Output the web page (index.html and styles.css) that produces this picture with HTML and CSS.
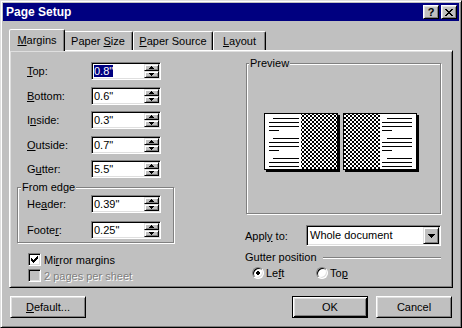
FILE: index.html
```html
<!DOCTYPE html>
<html lang="en">
<head>
    <meta charset="UTF-8">
    <title>Page Setup</title>
    <link rel="stylesheet" href="styles.css">
</head>
<body>
<div class="dialog">
    <div class="titlebar">
        <span class="title">Page Setup</span>
        <div class="title-buttons">
            <span class="tbtn">?</span>
            <span class="tbtn">
                <svg width="8" height="7" viewBox="0 0 8 7"><path d="M0 0h2v1H0zM6 0h2v1H6zM1 1h2v1H1zM5 1h2v1H5zM2 2h4v1H2zM3 3h2v1H3zM2 4h4v1H2zM1 5h2v1H1zM5 5h2v1H5zM0 6h2v1H0zM6 6h2v1H6z"/></svg>
            </span>
        </div>
    </div>

    <div class="sheet">
        <div class="tabs">
            <div class="tab active"><span><u>M</u>argins</span></div>
            <div class="tab tab-size"><span>Paper <u>S</u>ize</span></div>
            <div class="tab tab-source"><span><u>P</u>aper Source</span></div>
            <div class="tab tab-layout"><span><u>L</u>ayout</span></div>
        </div>

        <div class="panel">
            <div class="col-left">
                <div class="fields">
                    <div class="field">
                        <label><u>T</u>op:</label>
                        <div class="spin"><span class="value"><span class="sel">0.8"</span></span><span class="arrows"><span class="arr"><svg width="5" height="3"><path d="M2 0h1v1h1v1h1v1H0V2h1V1h1z"/></svg></span><span class="arr"><svg width="5" height="3"><path d="M0 0h5v1H4v1H3v1H2V2H1V1H0z"/></svg></span></span></div>
                    </div>
                    <div class="field">
                        <label><u>B</u>ottom:</label>
                        <div class="spin"><span class="value">0.6"</span><span class="arrows"><span class="arr"><svg width="5" height="3"><path d="M2 0h1v1h1v1h1v1H0V2h1V1h1z"/></svg></span><span class="arr"><svg width="5" height="3"><path d="M0 0h5v1H4v1H3v1H2V2H1V1H0z"/></svg></span></span></div>
                    </div>
                    <div class="field">
                        <label>I<u>n</u>side:</label>
                        <div class="spin"><span class="value">0.3"</span><span class="arrows"><span class="arr"><svg width="5" height="3"><path d="M2 0h1v1h1v1h1v1H0V2h1V1h1z"/></svg></span><span class="arr"><svg width="5" height="3"><path d="M0 0h5v1H4v1H3v1H2V2H1V1H0z"/></svg></span></span></div>
                    </div>
                    <div class="field">
                        <label><u>O</u>utside:</label>
                        <div class="spin"><span class="value">0.7"</span><span class="arrows"><span class="arr"><svg width="5" height="3"><path d="M2 0h1v1h1v1h1v1H0V2h1V1h1z"/></svg></span><span class="arr"><svg width="5" height="3"><path d="M0 0h5v1H4v1H3v1H2V2H1V1H0z"/></svg></span></span></div>
                    </div>
                    <div class="field">
                        <label>G<u>u</u>tter:</label>
                        <div class="spin"><span class="value">5.5"</span><span class="arrows"><span class="arr"><svg width="5" height="3"><path d="M2 0h1v1h1v1h1v1H0V2h1V1h1z"/></svg></span><span class="arr"><svg width="5" height="3"><path d="M0 0h5v1H4v1H3v1H2V2H1V1H0z"/></svg></span></span></div>
                    </div>
                </div>

                <div class="group edge">
                    <div class="group-title">From edge</div>
                    <div class="field">
                        <label>He<u>a</u>der:</label>
                        <div class="spin"><span class="value">0.39"</span><span class="arrows"><span class="arr"><svg width="5" height="3"><path d="M2 0h1v1h1v1h1v1H0V2h1V1h1z"/></svg></span><span class="arr"><svg width="5" height="3"><path d="M0 0h5v1H4v1H3v1H2V2H1V1H0z"/></svg></span></span></div>
                    </div>
                    <div class="field">
                        <label>Foote<u>r</u>:</label>
                        <div class="spin"><span class="value">0.25"</span><span class="arrows"><span class="arr"><svg width="5" height="3"><path d="M2 0h1v1h1v1h1v1H0V2h1V1h1z"/></svg></span><span class="arr"><svg width="5" height="3"><path d="M0 0h5v1H4v1H3v1H2V2H1V1H0z"/></svg></span></span></div>
                    </div>
                </div>

                <div class="checks">
                    <div class="check">
                        <span class="box"><svg width="7" height="7"><path d="M6 0h1v1H6zM5 1h2v1H5zM0 2h1v1H0zM4 2h3v1H4zM0 3h2v1H0zM3 3h3v1H3zM0 4h5v1H0zM1 5h3v1H1zM2 6h1v1H2z"/></svg></span>
                        <span>Mi<u>r</u>ror margins</span>
                    </div>
                    <div class="check disabled">
                        <span class="box"></span>
                        <span>2 pages per sheet</span>
                    </div>
                </div>
            </div>

            <div class="col-right">
                <div class="group preview">
                    <div class="group-title">Preview</div>
                    <div class="preview-body">
                        <svg width="155" height="59" viewBox="0 0 155 59">
                            <defs>
                                <pattern id="chk" width="4" height="4" patternUnits="userSpaceOnUse">
                                    <rect width="4" height="4" fill="#fff"/>
                                    <rect width="2" height="2" fill="#000"/>
                                    <rect x="2" y="2" width="2" height="2" fill="#000"/>
                                </pattern>
                            </defs>
                            <!-- left page -->
                            <rect x="2" y="2" width="74" height="57" fill="#000"/>
                            <rect x="0" y="0" width="74" height="57" fill="#000"/>
                            <rect x="1" y="1" width="72" height="55" fill="#fff"/>
                            <rect x="37" y="1" width="36" height="55" fill="url(#chk)"/>
                            <g fill="#000">
                                <rect x="9" y="5" width="26" height="1"/>
                                <rect x="5" y="9" width="30" height="1"/>
                                <rect x="5" y="13" width="30" height="1"/>
                                <rect x="5" y="17" width="10" height="1"/>
                                <rect x="9" y="25" width="26" height="1"/>
                                <rect x="5" y="29" width="30" height="1"/>
                                <rect x="5" y="33" width="30" height="1"/>
                                <rect x="5" y="37" width="10" height="1"/>
                                <rect x="9" y="45" width="26" height="1"/>
                                <rect x="5" y="49" width="30" height="1"/>
                                <rect x="5" y="53" width="30" height="1"/>
                            </g>
                            <!-- right page -->
                            <rect x="81" y="2" width="74" height="57" fill="#000"/>
                            <rect x="79" y="0" width="74" height="57" fill="#000"/>
                            <rect x="80" y="1" width="72" height="55" fill="#fff"/>
                            <rect x="80" y="1" width="36" height="55" fill="url(#chk)"/>
                            <g fill="#000">
                                <rect x="123" y="5" width="25" height="1"/>
                                <rect x="118" y="9" width="30" height="1"/>
                                <rect x="118" y="13" width="30" height="1"/>
                                <rect x="118" y="17" width="10" height="1"/>
                                <rect x="123" y="25" width="25" height="1"/>
                                <rect x="118" y="29" width="30" height="1"/>
                                <rect x="118" y="33" width="30" height="1"/>
                                <rect x="118" y="37" width="10" height="1"/>
                                <rect x="123" y="45" width="25" height="1"/>
                                <rect x="118" y="49" width="30" height="1"/>
                                <rect x="118" y="53" width="30" height="1"/>
                            </g>
                        </svg>
                    </div>
                </div>

                <div class="apply">
                    <label>Appl<u>y</u> to:</label>
                    <div class="combo">
                        <span class="value">Whole document</span>
                        <span class="drop"><svg width="7" height="4"><path d="M0 0h7v1H6v1H5v1H4v1H3V3H2V2H1V1H0z"/></svg></span>
                    </div>
                </div>

                <div class="gutter-head">
                    <span>Gutter position</span>
                    <span class="rule"></span>
                </div>

                <div class="radios">
                    <div class="radio radio-left">
                        <span class="circle"><svg width="4" height="4"><path d="M1 0h2v1h1v2H3v1H1V3H0V1h1z"/></svg></span>
                        <span>Le<u>f</u>t</span>
                    </div>
                    <div class="radio">
                        <span class="circle"></span>
                        <span>To<u>p</u></span>
                    </div>
                </div>
            </div>
        </div>

        <div class="buttons">
            <div class="btn"><span><u>D</u>efault...</span></div>
            <div class="btn default-btn push-right">OK</div>
            <div class="btn">Cancel</div>
        </div>
    </div>
</div>
</body>
</html>
```

FILE: styles.css
```css
body {
    margin: 0;
    font-family: "Liberation Sans", Arial, sans-serif;
    font-size: 11px;
    color: #000;
    background-color: #c0c0c0;
}

.dialog {
    width: 462px;
    height: 328px;
    box-sizing: border-box;
    padding: 2px;
    background-color: #c0c0c0;
    border: 1px solid;
    border-color: #dfdfdf #000 #000 #dfdfdf;
    box-shadow: inset 1px 1px #fff, inset -1px -1px #808080;
}

/* title bar */
.titlebar {
    height: 18px;
    display: flex;
    align-items: center;
    padding: 0 2px 0 3px;
    background-color: #000080;
    color: #fff;
}

.title {
    font-weight: bold;
    font-size: 12px;
}

.title-buttons {
    margin-left: auto;
    display: flex;
    gap: 2px;
}

.tbtn {
    width: 16px;
    height: 14px;
    box-sizing: border-box;
    display: flex;
    align-items: center;
    justify-content: center;
    background-color: #c0c0c0;
    color: #000;
    font-weight: bold;
    font-size: 11px;
    line-height: 1;
    border: 1px solid;
    border-color: #fff #000 #000 #fff;
    box-shadow: inset 1px 1px #dfdfdf, inset -1px -1px #808080;
}

/* tabs */
.sheet {
    margin: 8px 6px 0;
}

.tabs {
    height: 21px;
    display: flex;
    align-items: flex-end;
    padding-left: 2px;
}

.tab {
    height: 19px;
    box-sizing: border-box;
    display: flex;
    align-items: center;
    justify-content: center;
    border: 1px solid;
    border-bottom: none;
    border-color: #fff #000 transparent #fff;
    border-radius: 2px 2px 0 0;
    box-shadow: inset -1px 0 #808080;
}

.tab.active {
    position: relative;
    z-index: 1;
    width: 56px;
    height: 22px;
    margin: 0 -2px -1px -2px;
    padding-bottom: 2px;
    background-color: #c0c0c0;
}

.tab-size { width: 70px; }
.tab-source { width: 80px; }
.tab-layout { width: 53px; }

.panel {
    height: 238px;
    box-sizing: border-box;
    padding: 11px 11px 0 7px;
    display: grid;
    grid-template-columns: 158px 196px;
    justify-content: space-between;
    align-items: start;
    border: 1px solid;
    border-color: #fff #000 #000 #fff;
    box-shadow: inset 1px 1px #dfdfdf, inset -1px -1px #808080;
}

/* spin fields */
.fields {
    display: flex;
    flex-direction: column;
    gap: 6.5px;
}

.field {
    display: flex;
    align-items: center;
    padding-left: 10px;
}

.field label {
    width: 64px;
}

.spin {
    width: 70px;
    height: 18px;
    box-sizing: border-box;
    padding: 1px;
    display: flex;
    background-color: #fff;
    border: 1px solid;
    border-color: #808080 #fff #fff #808080;
    box-shadow: inset 1px 1px #000, inset -1px -1px #dfdfdf;
}

.spin .value {
    flex: 1;
    padding-left: 1px;
    line-height: 14px;
}

.sel {
    background-color: #000080;
    color: #fff;
}

.arrows {
    width: 15px;
    display: flex;
    flex-direction: column;
}

.arr {
    flex: 1;
    box-sizing: border-box;
    display: flex;
    align-items: center;
    justify-content: center;
    background-color: #c0c0c0;
    border: 1px solid;
    border-color: #dfdfdf #000 #000 #dfdfdf;
    box-shadow: inset 1px 1px #fff, inset -1px -1px #808080;
}

.arr svg,
.drop svg {
    display: block;
}

/* group boxes */
.group {
    box-sizing: border-box;
    border: 1px solid #808080;
    box-shadow: inset 1px 1px #fff, 1px 1px #fff;
}

.group-title {
    width: fit-content;
    margin: -7px 0 0 3px;
    padding: 0 1px;
    line-height: 13px;
    background-color: #c0c0c0;
}

.edge {
    width: 157px;
    height: 56px;
    margin-top: 9px;
}

.edge .field {
    padding-left: 9px;
    margin-top: 1px;
}

.edge .field + .field {
    margin-top: 8px;
}

/* checkboxes */
.checks {
    margin-top: 10px;
    padding-left: 11px;
    display: flex;
    flex-direction: column;
    gap: 3px;
}

.check {
    height: 13px;
    display: flex;
    align-items: center;
    gap: 3px;
}

.box {
    width: 13px;
    height: 13px;
    box-sizing: border-box;
    display: flex;
    align-items: center;
    justify-content: center;
    background-color: #fff;
    border: 1px solid;
    border-color: #808080 #fff #fff #808080;
    box-shadow: inset 1px 1px #000, inset -1px -1px #dfdfdf;
}

.check.disabled {
    color: #808080;
    text-shadow: 1px 1px #fff;
}

.check.disabled .box {
    background-color: #c0c0c0;
}

/* right column */
.preview {
    width: 195px;
    height: 151px;
    margin: 1px 0 0 1px;
    display: flex;
    flex-direction: column;
}

.preview .group-title {
    margin-left: 2px;
}

.preview-body {
    flex: 1;
    display: flex;
    align-items: center;
    justify-content: center;
}

.preview-body svg {
    margin-right: 4px;
    margin-top: 1px;
}

.apply {
    margin-top: 11px;
    display: flex;
    align-items: center;
}

.apply label {
    width: 61px;
}

.combo {
    width: 135px;
    height: 21px;
    box-sizing: border-box;
    padding: 1px;
    display: flex;
    background-color: #fff;
    border: 1px solid;
    border-color: #808080 #fff #fff #808080;
    box-shadow: inset 1px 1px #000, inset -1px -1px #dfdfdf;
}

.combo .value {
    flex: 1;
    padding-left: 2px;
    line-height: 17px;
}

.drop {
    width: 16px;
    box-sizing: border-box;
    display: flex;
    align-items: center;
    justify-content: center;
    background-color: #c0c0c0;
    border: 1px solid;
    border-color: #dfdfdf #000 #000 #dfdfdf;
    box-shadow: inset 1px 1px #fff, inset -1px -1px #808080;
}

.gutter-head {
    margin-top: 5px;
    display: flex;
    align-items: center;
    line-height: 13px;
}

.rule {
    flex: 1;
    margin-left: 6px;
    border-top: 1px solid #808080;
    border-bottom: 1px solid #fff;
}

.radios {
    margin-top: 3px;
    padding-left: 7px;
    display: flex;
    align-items: center;
}

.radio {
    display: flex;
    align-items: center;
    gap: 2px;
}

.radio-left {
    width: 64px;
}

.circle {
    width: 12px;
    height: 12px;
    box-sizing: border-box;
    display: flex;
    align-items: center;
    justify-content: center;
    border-radius: 50%;
    background-color: #fff;
    border: 1px solid;
    border-color: #808080 #fff #fff #808080;
    box-shadow: inset 1px 1px #000, inset -1px -1px #dfdfdf;
}

/* dialog buttons */
.buttons {
    margin-top: 8px;
    padding: 0 1px;
    display: flex;
    gap: 8px;
}

.btn {
    width: 76px;
    height: 22px;
    box-sizing: border-box;
    display: flex;
    align-items: center;
    justify-content: center;
    border: 1px solid;
    border-color: #fff #000 #000 #fff;
    box-shadow: inset 1px 1px #dfdfdf, inset -1px -1px #808080;
}

.default-btn {
    border-color: #000;
    box-shadow: inset 1px 1px #fff, inset -1px -1px #000, inset 2px 2px #dfdfdf, inset -2px -2px #808080;
}

.push-right {
    margin-left: auto;
}
```
